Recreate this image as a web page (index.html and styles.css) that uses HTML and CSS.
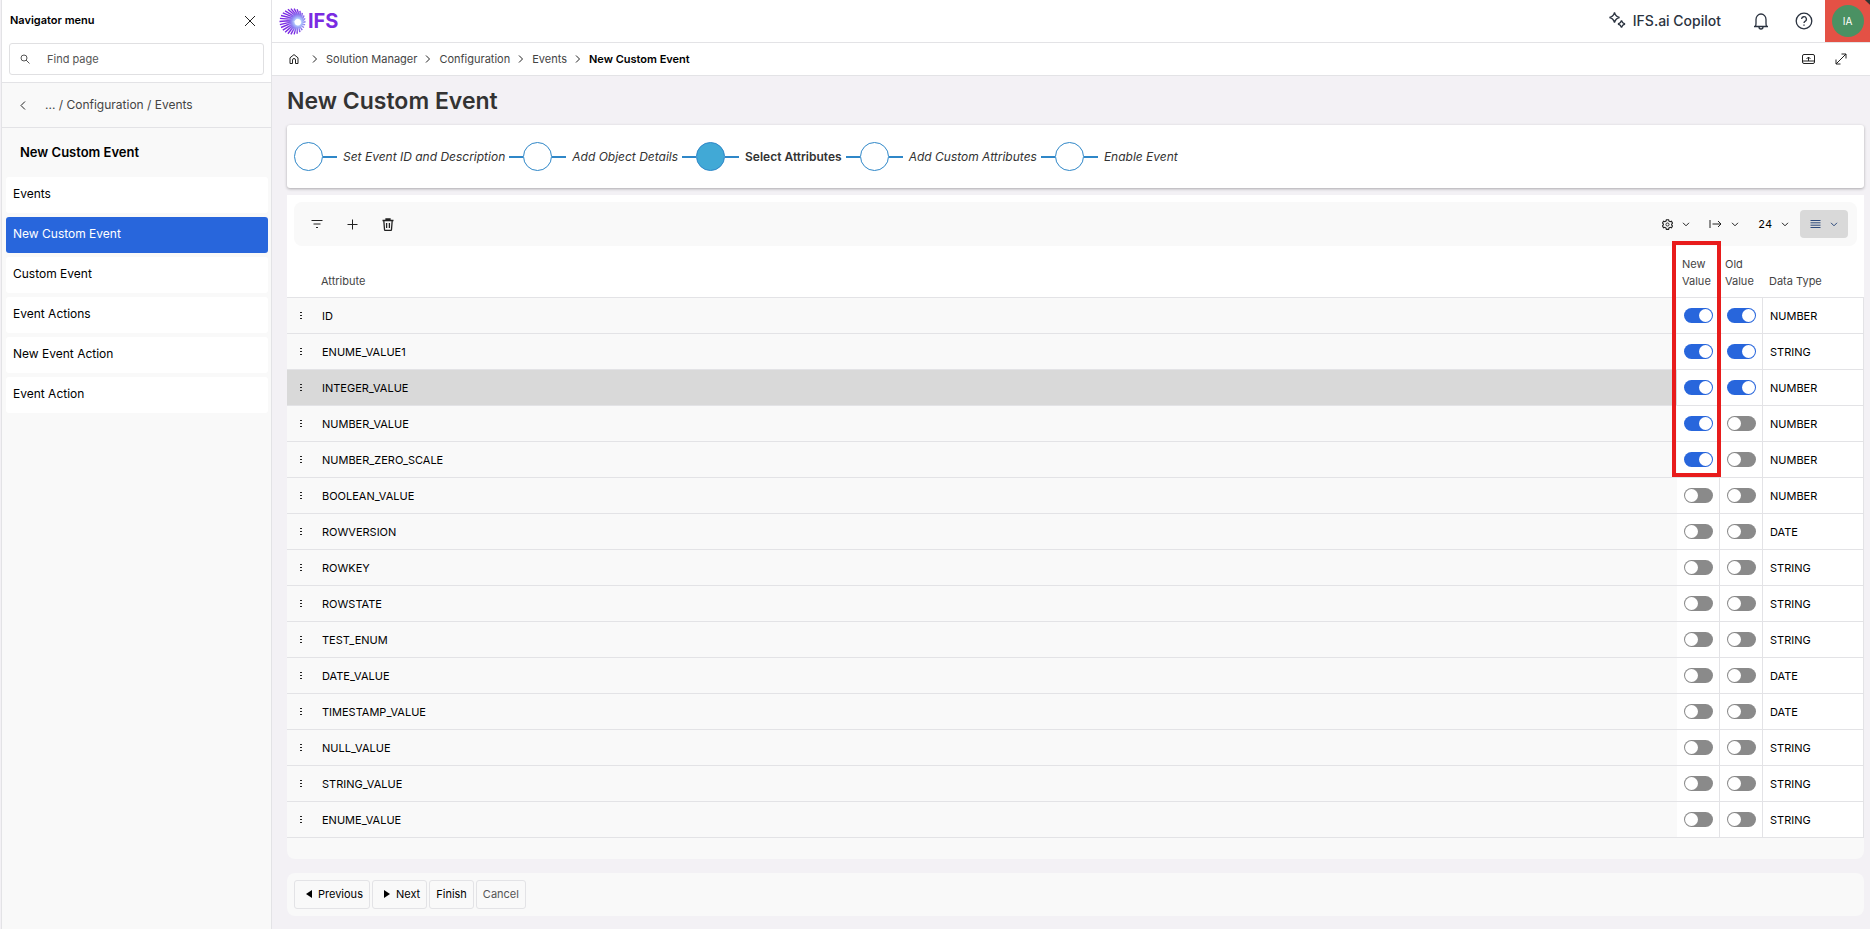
FILE: index.html
```html
<!DOCTYPE html>
<html lang="en">
<head>
<meta charset="utf-8">
<title>New Custom Event</title>
<link rel="stylesheet" href="styles.css">
</head>
<body>
<div class="app">
  <aside class="sidebar">
    <div class="nav-head">
      <div class="nav-title"><span>Navigator menu</span>
        <button class="icon-btn" aria-label="Close"><svg width="12" height="12" viewBox="0 0 12 12"><path d="M1 1l10 10M11 1L1 11"/></svg></button>
      </div>
      <label class="search"><svg width="10" height="10" viewBox="0 0 10 10"><circle cx="4" cy="4" r="3"/><path d="M6 6l3.500 3.500"/></svg>
        <input type="text" placeholder="Find page" aria-label="Find page"></label>
    </div>
    <a class="back" href="#"><svg width="6" height="9" viewBox="0 0 6 9"><path d="M5 .5L1 4.500l4 4"/></svg><span>... / Configuration / Events</span></a>
    <h2 class="nav-section">New Custom Event</h2>
    <nav class="nav-list">
      <a href="#">Events</a>
      <a href="#" class="active">New Custom Event</a>
      <a href="#">Custom Event</a>
      <a href="#">Event Actions</a>
      <a href="#">New Event Action</a>
      <a href="#">Event Action</a>
    </nav>
  </aside>

  <div class="main">
    <header class="topbar">
      <a class="logo" href="#" aria-label="IFS">
        <svg id="burst" width="27" height="27" viewBox="0 0 27 27"><defs><radialGradient id="g" gradientUnits="userSpaceOnUse" cx="19" cy="14" r="15"><stop offset=".15" stop-color="#bfe6ff"/><stop offset=".45" stop-color="#8f86f2"/><stop offset=".75" stop-color="#7a2be2"/></radialGradient></defs></svg>
        <span>IFS</span>
      </a>
      <div class="top-actions">
        <button class="copilot"><svg width="18" height="18" viewBox="0 0 18 18"><path d="M6.500 .5Q7.500 4.500 11.500 5.500 7.500 6.500 6.500 10.500 5.500 6.500 1.500 5.500 5.500 4.500 6.500 .5zM13.500 8.500Q14.200 11.300 17 12 14.200 12.700 13.500 15.500 12.800 12.700 10 12 12.800 11.300 13.500 8.500z"/></svg><span>IFS.ai Copilot</span></button>
        <button class="icon-btn" aria-label="Notifications"><svg width="16" height="17" viewBox="0 0 16 17"><path d="M1 13.500h14M2.500 13.500Q3 12 3 10V6.500a5 5.500 0 0 1 10 0V10q0 2 .5 3.500M6 14a2 2 0 0 0 4 0"/></svg></button>
        <button class="icon-btn" aria-label="Help"><svg width="18" height="18" viewBox="0 0 18 18"><circle cx="9" cy="9" r="7.800"/><path d="M6.600 7a2.400 2.400 0 1 1 3.400 2.300Q9 9.800 9 11M9 12.500v1.200"/></svg></button>
        <button class="account" aria-label="Account"><span>IA</span></button>
      </div>
    </header>

    <div class="crumb-bar">
      <nav class="crumbs">
        <a class="home" href="#" aria-label="Home"><svg width="10" height="10" viewBox="0 0 10 10"><path d="M1 9.500V3.800L5 .6l4 3.200v5.700H6.500V6a1.500 1.500 0 0 0-3 0v3.500z"/></svg></a>
        <svg width="6" height="8" viewBox="0 0 6 8"><path d="M1 .5L4.500 4 1 7.500"/></svg>
        <a href="#">Solution Manager</a>
        <svg width="6" height="8" viewBox="0 0 6 8"><path d="M1 .5L4.500 4 1 7.500"/></svg>
        <a href="#">Configuration</a>
        <svg width="6" height="8" viewBox="0 0 6 8"><path d="M1 .5L4.500 4 1 7.500"/></svg>
        <a href="#">Events</a>
        <svg width="6" height="8" viewBox="0 0 6 8"><path d="M1 .5L4.500 4 1 7.500"/></svg>
        <strong>New Custom Event</strong>
      </nav>
      <div class="crumb-actions">
        <button class="icon-btn" aria-label="Attachments"><svg width="13" height="10" viewBox="0 0 13 10"><path d="M3 .5H2Q.5.5.5 2v6Q.5 9.500 2 9.500h9q1.500 0 1.500-1.500V2Q12.500.5 11 .5H3M.5 7h12M6.500 7V3M4.500 5l2-2 2 2"/></svg></button>
        <button class="icon-btn" aria-label="Full screen"><svg width="12" height="12" viewBox="0 0 12 12"><path d="M1 11L11 1M6.500 1H11v4.500M1 6.500V11h4.500"/></svg></button>
      </div>
    </div>

    <main class="content">
      <h1>New Custom Event</h1>
      <ol class="steps">
        <li><i class="dot"></i><span>Set Event ID and Description</span></li>
        <li><i class="dot"></i><span>Add Object Details</span></li>
        <li class="current"><i class="dot"></i><span>Select Attributes</span></li>
        <li><i class="dot"></i><span>Add Custom Attributes</span></li>
        <li><i class="dot"></i><span>Enable Event</span></li>
      </ol>

      <section class="panel">
        <div class="toolbar-area">
        <div class="toolbar">
          <div class="tools">
            <button class="icon-btn" aria-label="Filter"><svg width="12" height="10" viewBox="0 0 12 10"><path d="M.5 1.500h11M2.500 5h7M5 8.500h2"/></svg></button>
            <button class="icon-btn" aria-label="Add"><svg width="11" height="11" viewBox="0 0 11 11"><path d="M5.500.5v10M.5 5.500h10"/></svg></button>
            <button class="icon-btn" aria-label="Delete"><svg width="12" height="13" viewBox="0 0 12 13"><path stroke-width="1.300" d="M.5 2.500h11M4 2.500V1h4v1.500M1.800 2.500l.7 9q.1 1 1 1h5q.9 0 1-1l.7-9M4.600 5v5M7.400 5v5"/></svg></button>
          </div>
          <div class="tools-right">
            <button class="menu-btn" aria-label="Settings"><svg width="11" height="11" viewBox="0 0 12 12"><path stroke-width="1.200" d="M4.800.8h2.400l.4 1.500 1.300.7 1.400-.5 1.200 2-1 1.100v.9l1 1.100-1.200 2-1.400-.5-1.300.7-.4 1.500H4.800l-.4-1.500L3.100 9l-1.400.5-1.200-2 1-1.100v-.9l-1-1.100 1.200-2 1.400.5 1.300-.7z"/><circle cx="6" cy="6" r="1.700"/></svg><svg width="8" height="5" viewBox="0 0 8 5"><path d="M1 .8l3 3 3-3"/></svg></button>
            <button class="menu-btn" aria-label="Export"><svg width="13" height="10" viewBox="0 0 13 10"><path d="M1 1v8M3.500 5h8.500M9 2l3 3-3 3"/></svg><svg width="8" height="5" viewBox="0 0 8 5"><path d="M1 .8l3 3 3-3"/></svg></button>
            <button class="menu-btn" aria-label="Page size"><span>24</span><svg width="8" height="5" viewBox="0 0 8 5"><path d="M1 .8l3 3 3-3"/></svg></button>
            <button class="menu-btn view" aria-label="View"><svg width="11" height="8" viewBox="0 0 11 8"><path d="M.5.5h10M.5 2.800h10M.5 5.200h10M.5 7.500h10"/></svg><svg width="8" height="5" viewBox="0 0 8 5"><path d="M1 .8l3 3 3-3"/></svg></button>
          </div>
        </div>
        </div>
        <div class="grid-wrap">
          <table>
            <thead><tr><th class="c-menu"></th><th>Attribute</th><th class="c-tog">New Value</th><th class="c-tog">Old Value</th><th class="c-type">Data Type</th></tr></thead>
            <tbody id="rows"></tbody>
          </table>
          <div class="highlight"></div>
        </div>
      </section>

      <footer class="actions">
        <button class="arrow"><svg width="6" height="8" viewBox="0 0 6 8"><path d="M6 0v8L0 4z"/></svg>Previous</button>
        <button class="arrow"><svg width="6" height="8" viewBox="0 0 6 8"><path d="M0 0v8l6-4z"/></svg>Next</button>
        <button>Finish</button>
        <button class="muted">Cancel</button>
      </footer>
    </main>
  </div>
</div>
<script src="app.js"></script>
</body>
</html>
```
FILE: styles.css
```css
* { box-sizing: border-box; }
body { margin: 0; font: 12px/16px Inter, "Liberation Sans", sans-serif; color: #000; background: #f3f1f5; }
button { font: inherit; color: inherit; background: none; border: 0; padding: 0; }
a { color: inherit; text-decoration: none; }
svg { display: block; flex: none; fill: none; stroke: #222; stroke-width: 1; }
.icon-btn { display: flex; align-items: center; justify-content: center; }
.app { display: flex; min-height: 100vh; }

.sidebar { width: 271px; flex: none; margin-left: 1px; background: #f9f9f9; border: 1px solid #e3e3e6; border-width: 0 1px; }
.main { flex: 1; min-width: 0; }
.nav-head { background: #fff; height: 83px; border-bottom: 1px solid #e3e3e6; padding: 12px 7px 0; }
.nav-title { display: flex; justify-content: space-between; padding: 0 8px 0 1px; font-size: 11px; font-weight: 600; height: 18px; }
.search { display: flex; align-items: center; gap: 17px; height: 32px; margin-top: 13px; padding: 0 10px; border: 1px solid #e0e0e2; border-radius: 3px; }
.search svg { stroke: #555; }
.search input { border: 0; outline: 0; flex: 1; min-width: 0; padding: 0; font: inherit; font-size: 11px; background: none; }
.search input::placeholder { color: #555; }
.back { display: flex; align-items: center; gap: 19px; height: 45px; padding: 0 18px; border-bottom: 1px solid #e3e3e6; font-size: 12px; color: #444; }
.nav-section { margin: 0; padding: 15px 18px 0; height: 49px; font-size: 13px; line-height: 18px; font-weight: 600; }
.nav-list { display: flex; flex-direction: column; gap: 4px; padding: 0 3px 0 4px; }
.nav-list a { height: 36px; padding: 0 7px 2px; display: flex; align-items: center; font-size: 12px; background: #fff; border-radius: 3px; }
.nav-list .active { background: #2866dc; color: #fff; }

.topbar { display: flex; justify-content: space-between; height: 43px; background: #fff; border-bottom: 1px solid #e3e3e6; }
.logo { display: flex; align-items: center; gap: 2px; padding-left: 7px; color: #7a2be2; font-size: 20px; font-weight: 700; }
.top-actions { display: flex; align-items: center; gap: 26px; color: #2b3340; }
.top-actions svg { stroke: #2b3340; stroke-width: 1.300; }
.copilot { display: flex; align-items: center; gap: 7px; font-size: 14px; line-height: 20px; font-weight: 500; margin-right: 6px; }
.account { width: 45px; height: 42px; background: linear-gradient(to bottom left, #333 3px, #e45145 4px); display: flex; align-items: center; justify-content: center; margin-left: -14px; }
.account span { width: 32px; height: 32px; border-radius: 50%; background: #4a9163; color: #fff; font-size: 10px; line-height: 32px; }

.crumb-bar { display: flex; justify-content: space-between; align-items: center; height: 33px; background: #fff; border-bottom: 1px solid #e3e3e6; padding: 0 23px 1px 17px; }
.crumbs { display: flex; align-items: center; gap: 8px; font-size: 11px; color: #444; }
.crumbs strong { font-weight: 600; color: #000; }
.home { padding-right: 5px; }
.crumb-actions { display: flex; gap: 20px; }

.content { padding: 11px 6px 12px 15px; }
h1 { margin: 0 0 10px; font-size: 23px; line-height: 28px; font-weight: 600; color: #333; }
.steps { list-style: none; margin: 0 0 7px; padding: 17px 7px; display: flex; background: #fff; border-radius: 3px; box-shadow: 0 1px 3px rgba(0,0,0,.3); color: #333; }
.steps li { display: flex; align-items: center; font-style: italic; }
.steps li::after, .dot::after { content: ""; width: 14px; height: 2px; background: #2f87c8; }
.steps li:last-child::after { display: none; }
.steps span { margin: 0 4px 0 20px; }
.dot { position: relative; width: 29px; height: 29px; border: 1px solid #2f87c8; border-radius: 50%; }
.dot::after { position: absolute; left: 28px; top: 13px; }
.current .dot { background: #41a9d6; }
.steps .current { font-style: normal; font-weight: 600; }

.panel { background: #f9f9f9; border-radius: 0 0 8px 8px; padding-bottom: 21px; }
.toolbar-area { background: #fff; padding: 7px 7px 0; }
.toolbar { display: flex; justify-content: space-between; align-items: center; height: 44px; background: #f9f9f9; border-radius: 8px; padding: 0 9px 0 17px; }
.tools { display: flex; gap: 24px; }
.tools-right { display: flex; align-items: center; gap: 19px; }
.menu-btn { display: flex; align-items: center; gap: 9px; font-size: 11px; }
.menu-btn.view { background: #d9d9d9; border-radius: 4px; height: 28px; padding: 0 10px; margin-left: -8px; }
.view svg { stroke: #2d4a7c; }

.grid-wrap { position: relative; background: #fff; }
table { width: 100%; border-collapse: separate; border-spacing: 0; table-layout: fixed; }
th { height: 52px; padding: 10px 0 7px 6px; vertical-align: bottom; text-align: left; font-weight: 400; font-size: 11px; line-height: 17px; color: #444; border-bottom: 1px solid #e3e3e6; }
th:nth-child(2) { padding-left: 4px; }
.c-tog { padding-left: 5px; }
td { height: 36px; padding: 0 0 0 5px; font-size: 11px; border-bottom: 1px solid #e3e3e6; border-right: 1px solid #e3e3e6; }
.c-menu { width: 30px; }
.c-tog { width: 43px; }
.c-type { width: 101px; }
td:nth-child(-n+2) { background: #f9f9f9; border-right: 0; }
td:last-child { padding-left: 7px; }
.selected td:nth-child(-n+2) { background: #d9d9d9; }
.kebab { display: flex; padding: 4px 8px; }
.kebab svg { fill: #222; stroke: none; }
.toggle { appearance: none; display: block; width: 29px; height: 15px; margin: 0 0 0 2px; border-radius: 8px; background: #8a8a8a; padding: 1px; }
.toggle::before { content: ""; display: block; width: 13px; height: 13px; border-radius: 50%; background: #fff; }
.toggle:checked { background: #2866dc; }
.toggle:checked::before { margin-left: 14px; }
.highlight { position: absolute; top: -5px; right: 143px; width: 49px; height: 236px; border: 4px solid #e81c1c; pointer-events: none; }

.actions { display: flex; gap: 2px; margin-top: 14px; padding: 7px; background: #f9f9f9; border-radius: 8px; }
.actions button { display: flex; align-items: center; height: 29px; padding: 0 6px 2px; font-size: 11px; border: 1px solid #e3e3e6; border-radius: 3px; }
.actions .arrow { gap: 6px; padding-left: 11px; }
.actions svg { fill: #000; stroke: none; }
.actions .muted { color: #555; }
```
FILE: app.js
```js
const rows = [
  ["ID", 1, 1, "NUMBER"], ["ENUME_VALUE1", 1, 1, "STRING"], ["INTEGER_VALUE", 1, 1, "NUMBER"],
  ["NUMBER_VALUE", 1, 0, "NUMBER"], ["NUMBER_ZERO_SCALE", 1, 0, "NUMBER"], ["BOOLEAN_VALUE", 0, 0, "NUMBER"],
  ["ROWVERSION", 0, 0, "DATE"], ["ROWKEY", 0, 0, "STRING"], ["ROWSTATE", 0, 0, "STRING"],
  ["TEST_ENUM", 0, 0, "STRING"], ["DATE_VALUE", 0, 0, "DATE"], ["TIMESTAMP_VALUE", 0, 0, "DATE"],
  ["NULL_VALUE", 0, 0, "STRING"], ["STRING_VALUE", 0, 0, "STRING"], ["ENUME_VALUE", 0, 0, "STRING"]
];
const toggle = (on, label) => `<input type="checkbox" role="switch" class="toggle" aria-label="${label}"${on ? " checked" : ""}>`;
document.getElementById("rows").innerHTML = rows.map(([name, n, o, type]) => `
  <tr class="${name === "INTEGER_VALUE" ? "selected" : ""}">
    <td><button class="kebab" aria-label="Row menu"><svg width="3" height="8" viewBox="0 0 3 8"><path d="M0 0h2v1H0zM0 3h2v1H0zM0 6h2v1H0z"/></svg></button></td>
    <td>${name}</td><td>${toggle(n, name + " new value")}</td><td>${toggle(o, name + " old value")}</td><td>${type}</td>
  </tr>`).join("");

// Logo burst: rays fan out from an off-centre point to the rim of a circle.
const burst = document.getElementById("burst");
let d = "";
for (let i = 0; i < 26; i++) {
  const a = i / 26 * Math.PI * 2, x = 13.5 + 13 * Math.cos(a), y = 13.5 + 13 * Math.sin(a);
  const b = a + 0.5, ix = 19 + 3.5 * Math.cos(b), iy = 14 + 3.5 * Math.sin(b);
  d += `M${x.toFixed(1)} ${y.toFixed(1)}L${ix.toFixed(1)} ${iy.toFixed(1)}`;
}
burst.insertAdjacentHTML("beforeend", `<path stroke="url(#g)" stroke-width="1.4" d="${d}"/>`);
```
